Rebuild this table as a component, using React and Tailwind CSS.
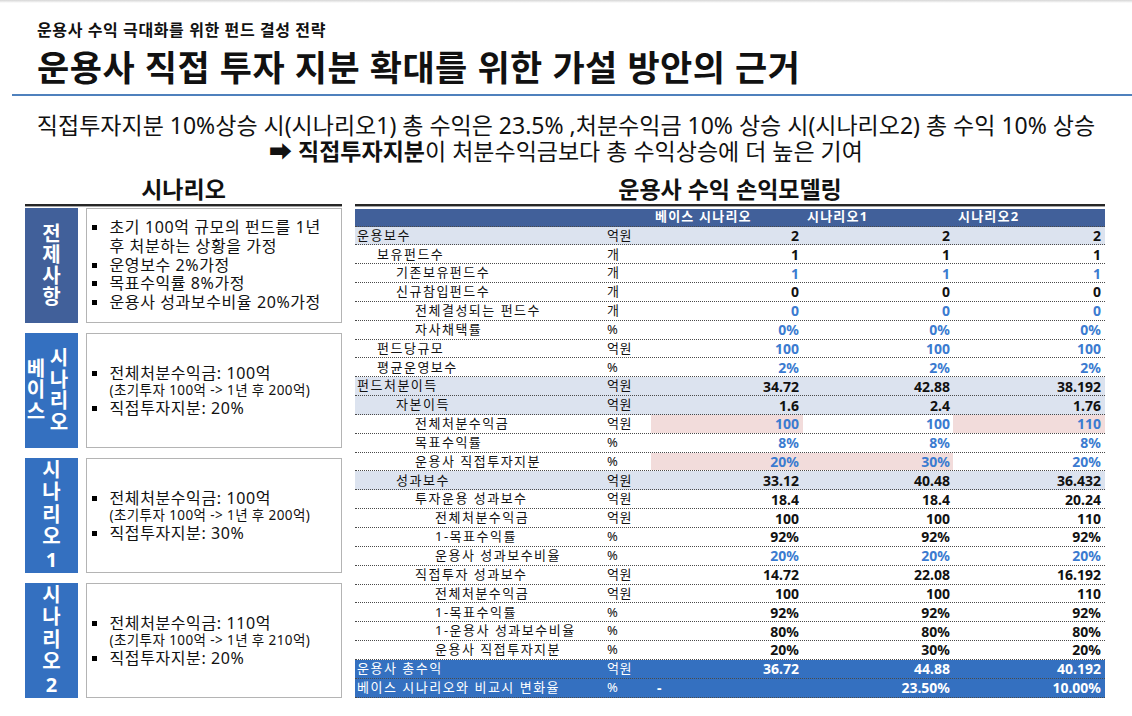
import React from 'react';

const rows = [
  { label: '운용보수', ind: 0, unit: '억원', v: ['2', '2', '2'], bg: 'light' },
  { label: '보유펀드수', ind: 1, unit: '개', v: ['1', '1', '1'] },
  { label: '기존보유펀드수', ind: 2, unit: '개', v: ['1', '1', '1'], blue: true },
  { label: '신규참입펀드수', ind: 2, unit: '개', v: ['0', '0', '0'] },
  { label: '전체결성되는 펀드수', ind: 3, unit: '개', v: ['0', '0', '0'], blue: true },
  { label: '자사채택률', ind: 3, unit: '%', v: ['0%', '0%', '0%'], blue: true },
  { label: '펀드당규모', ind: 1, unit: '억원', v: ['100', '100', '100'], blue: true },
  { label: '평균운영보수', ind: 1, unit: '%', v: ['2%', '2%', '2%'], blue: true },
  { label: '펀드처분이득', ind: 0, unit: '억원', v: ['34.72', '42.88', '38.192'], bg: 'light' },
  { label: '자본이득', ind: 2, unit: '억원', v: ['1.6', '2.4', '1.76'], bg: 'light' },
  { label: '전체처분수익금', ind: 3, unit: '억원', v: ['100', '100', '110'], blue: true, pink: [0, 2] },
  { label: '목표수익률', ind: 3, unit: '%', v: ['8%', '8%', '8%'], blue: true },
  { label: '운용사 직접투자지분', ind: 3, unit: '%', v: ['20%', '30%', '20%'], blue: true, pink: [0, 1] },
  { label: '성과보수', ind: 2, unit: '억원', v: ['33.12', '40.48', '36.432'], bg: 'light' },
  { label: '투자운용 성과보수', ind: 3, unit: '억원', v: ['18.4', '18.4', '20.24'] },
  { label: '전체처분수익금', ind: 4, unit: '억원', v: ['100', '100', '110'] },
  { label: '1-목표수익률', ind: 4, unit: '%', v: ['92%', '92%', '92%'] },
  { label: '운용사 성과보수비율', ind: 4, unit: '%', v: ['20%', '20%', '20%'], blue: true },
  { label: '직접투자 성과보수', ind: 3, unit: '억원', v: ['14.72', '22.08', '16.192'] },
  { label: '전체처분수익금', ind: 4, unit: '억원', v: ['100', '100', '110'] },
  { label: '1-목표수익률', ind: 4, unit: '%', v: ['92%', '92%', '92%'] },
  { label: '1-운용사 성과보수비율', ind: 4, unit: '%', v: ['80%', '80%', '80%'] },
  { label: '운용사 직접투자지분', ind: 4, unit: '%', v: ['20%', '30%', '20%'] },
  { label: '운용사 총수익', ind: 0, unit: '억원', v: ['36.72', '44.88', '40.192'], bg: 'dark' },
  { label: '베이스 시나리오와 비교시 변화율', ind: 0, unit: '%', v: ['-', '23.50%', '10.00%'], bg: 'dark' },
];

const indents = ['pl-[2px]', 'pl-[22px]', 'pl-[41px]', 'pl-[60px]', 'pl-[80px]'];
const colW = ['w-[152px] pr-[4px]', 'w-[150px] pr-[3px]', 'w-[152px] pr-[4px]'];

function Row({ r }) {
  const rowBg = r.bg === 'light' ? 'bg-[#dce3ef]' : r.bg === 'dark' ? 'bg-[#3470c0] text-white' : '';
  return (
    <div className={`flex h-[18.85px] items-center border-b border-dotted border-[#4a4a4a] ${rowBg}`}>
      <div className={`w-[250px] text-[13px] tracking-[1.5px] whitespace-nowrap ${indents[r.ind]}`}>{r.label}</div>
      <div className="w-[46px] pl-[2px] text-[13px] tracking-[0.5px]">{r.unit}</div>
      {r.v.map((val, i) => {
        const pink = r.pink && r.pink.includes(i) ? 'bg-[#f2dcdb]' : '';
        const color = r.bg === 'dark' ? 'text-white' : r.blue ? 'text-[#3b7bd0]' : 'text-[#111]';
        if (val === '-') {
          return (
            <div key={i} className={`h-full flex items-center pl-[6px] text-[14px] font-bold ${colW[i]}`}>-</div>
          );
        }
        return (
          <div key={i} className={`h-full flex items-center justify-end text-[14px] font-bold ${colW[i]} ${pink} ${color}`}>
            {val}
          </div>
        );
      })}
    </div>
  );
}

function Bullet({ children }) {
  return (
    <div className="flex items-start">
      <span className="w-[5px] h-[5px] bg-black mt-[7px] shrink-0 mr-[12.5px]" />
      <div>{children}</div>
    </div>
  );
}

function ScenarioBox({ label, children }) {
  return (
    <div className="flex h-[115px] gap-[8px]">
      <div className="w-[53px] bg-[#3470c0] text-white font-bold text-[20px] flex items-center justify-center text-center">
        {label}
      </div>
      <div className="flex-1 border-[1.5px] border-[#b4b4b4] flex flex-col justify-center pl-[5px] text-[16px] tracking-[0.6px] leading-[18px]">
        {children}
      </div>
    </div>
  );
}

function Detail({ total, sub, share }) {
  return (
    <>
      <Bullet>전체처분수익금: {total}</Bullet>
      <div className="pl-[17.5px] text-[13.5px] tracking-[0.4px] leading-[16px] mb-[1px]">{sub}</div>
      <Bullet>직접투자지분: {share}</Bullet>
    </>
  );
}

function Stack({ text, lh }) {
  return (
    <div className="flex flex-col items-center">
      {text.split('').map((c, i) => (
        <span key={i} className={lh}>{c}</span>
      ))}
    </div>
  );
}

export default function App() {
  return (
    <div className="w-[1132px] h-[716px] bg-white overflow-hidden text-[#111] font-['Noto_Sans','Noto_Sans_CJK_KR',sans-serif]">
      <div className="h-[3px] bg-linear-to-b from-[#d6d6d6] to-white" />
      <div className="pl-[37px] pt-[15px]">
        <div className="text-[16px] leading-[24px] font-bold tracking-[0.6px]">운용사 수익 극대화를 위한 펀드 결성 전략</div>
        <div className="mt-[4px] text-[35px] leading-[44px] font-bold tracking-[0.5px]">운용사 직접 투자 지분 확대를 위한 가설 방안의 근거</div>
      </div>
      <div className="ml-[12px] mt-[4px] h-[1.5px] bg-[#4f81bd]" />

      <div className="mt-[16px] text-center text-[23px] leading-[26px]">
        <div className="whitespace-nowrap">직접투자지분 10%상승 시(시나리오1) 총 수익은 23.5% ,처분수익금 10% 상승 시(시나리오2) 총 수익 10% 상승</div>
        <div>
          <span className="font-bold">➡ 직접투자지분</span>이 처분수익금보다 총 수익상승에 더 높은 기여
        </div>
      </div>

      <div className="flex pl-[25px] gap-[13px] mt-[13px]">
        {/* left: scenarios */}
        <div className="w-[317px]">
          <div className="h-[24px] leading-[24px] text-center text-[23px] font-bold">시나리오</div>
          <div className="mt-[3px] h-[3px] border-t-2 border-[#262626] border-b border-b-[#a6a6a6]" />
          <div className="mt-[1px] flex flex-col gap-[10px]">
            <div className="flex h-[115px] gap-[8px]">
              <div className="w-[53px] bg-[#41609a] text-white font-bold text-[20px] flex items-center justify-center">
                <Stack text="전제사항" lh="leading-[21px]" />
              </div>
              <div className="flex-1 border-[1.5px] border-[#b4b4b4] flex flex-col justify-center pl-[5px] text-[16px] tracking-[0.6px] leading-[18.7px]">
                <Bullet>
                  초기 100억 규모의 펀드를 1년
                  <br />후 처분하는 상황을 가정
                </Bullet>
                <Bullet>운영보수 2%가정</Bullet>
                <Bullet>목표수익률 8%가정</Bullet>
                <Bullet>운용사 성과보수비율 20%가정</Bullet>
              </div>
            </div>

            <ScenarioBox
              label={
                <div className="w-full flex justify-start items-center gap-[3px] pl-[1px]">
                  <div className="w-[20px]"><Stack text="베이스" lh="leading-[21.5px]" /></div>
                  <div className="w-[20px]"><Stack text="시나리오" lh="leading-[21.5px]" /></div>
                </div>
              }
            >
              <Detail total="100억" sub="(초기투자 100억 -> 1년 후 200억)" share="20%" />
            </ScenarioBox>

            <ScenarioBox label={<Stack text="시나리오1" lh="leading-[22.5px]" />}>
              <Detail total="100억" sub="(초기투자 100억 -> 1년 후 200억)" share="30%" />
            </ScenarioBox>

            <ScenarioBox label={<Stack text="시나리오2" lh="leading-[22.5px]" />}>
              <Detail total="110억" sub="(초기투자 100억 -> 1년 후 210억)" share="20%" />
            </ScenarioBox>
          </div>
        </div>

        {/* right: model table */}
        <div className="w-[750px]">
          <div className="h-[24px] leading-[24px] text-center text-[23px] font-bold">운용사 수익 손익모델링</div>
          <div className="mt-[3px] h-[3px] border-t-2 border-[#262626] border-b border-b-[#a6a6a6]" />
          <div className="mt-[2px]">
            <div className="flex h-[18px] items-center bg-[#41609a] text-white text-[13px] font-bold tracking-[1.2px] border-b border-dotted border-[#4a4a4a]">
              <div className="w-[296px]" />
              <div className="w-[152px] pl-[4px]">베이스 시나리오</div>
              <div className="w-[150px] pl-[4px]">시나리오1</div>
              <div className="w-[152px] pl-[5px]">시나리오2</div>
            </div>
            {rows.map((r, i) => (
              <Row key={i} r={r} />
            ))}
          </div>
        </div>
      </div>
    </div>
  );
}
